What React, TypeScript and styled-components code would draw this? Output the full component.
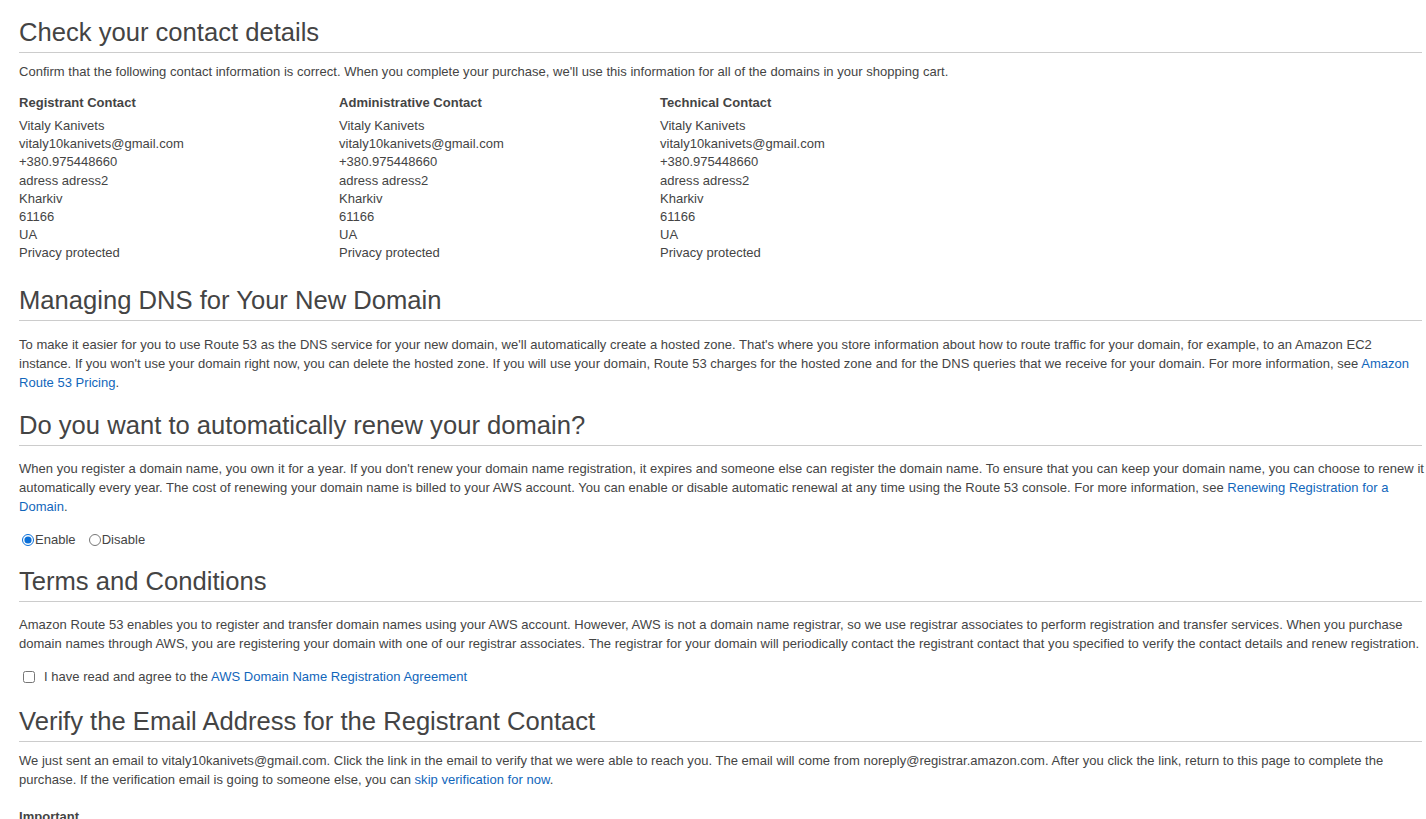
import React from "react";
import styled, { createGlobalStyle } from "styled-components";

const Global = createGlobalStyle`
  html, body { margin: 0; padding: 0; background: #fff; }
  body { font-family: "Liberation Sans", Arial, sans-serif; color: #444; }
`;

const Page = styled.div`
  padding: 0 4px 0 19px;
  font-size: 13px;
  letter-spacing: 0.025px;
`;

const Section = styled.section<{ $top: number }>`
  display: flex;
  flex-direction: column;
  margin-top: ${(p) => p.$top}px;
`;

const Heading = styled.h2`
  margin: 0;
  padding: 15px 0 5px;
  font-size: 25.6px;
  font-weight: normal;
  letter-spacing: 0;
  line-height: 30px;
  color: #444;
  border-bottom: 1px solid #ccc;
`;

const Para = styled.p<{ $top: number }>`
  margin: 0 -3px 0 0;
  padding: ${(p) => p.$top}px 0 0;
  line-height: 19px;
`;

const Link = styled.a`
  color: #1166bb;
  text-decoration: none;
`;

const Contacts = styled.div`
  display: grid;
  grid-template-columns: 320px 321px 320px;
  padding: 13px 0 8px;
`;

const Contact = styled.div`
  display: flex;
  flex-direction: column;
  line-height: 18.15px;
`;

const ContactTitle = styled.div`
  font-weight: bold;
  margin-bottom: 5px;
`;

const Options = styled.div`
  display: flex;
  align-items: center;
  gap: 10px;
  padding-top: 15px;
  line-height: 18px;
`;

const Option = styled.label`
  display: flex;
  align-items: center;
`;

const Radio = styled.input`
  margin: 0 1px 0 3px;
  width: 12px;
  height: 12px;
  accent-color: #0a6fd8;
`;

const CheckRow = styled.label`
  display: flex;
  align-items: center;
  gap: 9px;
  padding-top: 15px;
  line-height: 18px;
`;

const Check = styled.input`
  margin: 0 0 0 4px;
  width: 12px;
  height: 12px;
`;

const Important = styled.div`
  font-weight: bold;
  padding-top: 19px;
  line-height: 18px;
`;

const contactLines = [
  "Vitaly Kanivets",
  "vitaly10kanivets@gmail.com",
  "+380.975448660",
  "adress adress2",
  "Kharkiv",
  "61166",
  "UA",
  "Privacy protected",
];

const titles = ["Registrant Contact", "Administrative Contact", "Technical Contact"];

export default function App() {
  return (
    <Page>
      <Global />
      <Section $top={2}>
        <Heading>Check your contact details</Heading>
        <Para $top={9}>
          Confirm that the following contact information is correct. When you complete your purchase, we'll use this
          information for all of the domains in your shopping cart.
        </Para>
        <Contacts>
          {titles.map((t) => (
            <Contact key={t}>
              <ContactTitle>{t}</ContactTitle>
              {contactLines.map((l) => (
                <div key={l}>{l}</div>
              ))}
            </Contact>
          ))}
        </Contacts>
      </Section>
      <Section $top={0}>
        <Heading>Managing DNS for Your New Domain</Heading>
        <Para $top={14}>
          To make it easier for you to use Route 53 as the DNS service for your new domain, we'll automatically create a
          hosted zone. That's where you store information about how to route traffic for your domain, for example, to an
          Amazon EC2 instance. If you won't use your domain right now, you can delete the hosted zone. If you will use your
          domain, Route 53 charges for the hosted zone and for the DNS queries that we receive for your domain. For more
          information, see <Link href="#">Amazon Route 53 Pricing</Link>.
        </Para>
      </Section>
      <Section $top={3}>
        <Heading>Do you want to automatically renew your domain?</Heading>
        <Para $top={13}>
          When you register a domain name, you own it for a year. If you don't renew your domain name registration, it
          expires and someone else can register the domain name. To ensure that you can keep your domain name, you can
          choose to renew it automatically every year. The cost of renewing your domain name is billed to your AWS account.
          You can enable or disable automatic renewal at any time using the Route 53 console. For more information, see{" "}
          <Link href="#">Renewing Registration for a Domain</Link>.
        </Para>
        <Options>
          <Option>
            <Radio type="radio" name="renew" defaultChecked />
            Enable
          </Option>
          <Option>
            <Radio type="radio" name="renew" />
            Disable
          </Option>
        </Options>
      </Section>
      <Section $top={2}>
        <Heading>Terms and Conditions</Heading>
        <Para $top={13}>
          Amazon Route 53 enables you to register and transfer domain names using your AWS account. However, AWS is not a
          domain name registrar, so we use registrar associates to perform registration and transfer services. When you
          purchase domain names through AWS, you are registering your domain with one of our registrar associates. The
          registrar for your domain will periodically contact the registrant contact that you specified to verify the
          contact details and renew registration.
        </Para>
        <CheckRow>
          <Check type="checkbox" />
          <span>
            I have read and agree to the <Link href="#">AWS Domain Name Registration Agreement</Link>
          </span>
        </CheckRow>
      </Section>
      <Section $top={5}>
        <Heading>Verify the Email Address for the Registrant Contact</Heading>
        <Para $top={9}>
          We just sent an email to vitaly10kanivets@gmail.com. Click the link in the email to verify that we were able to
          reach you. The email will come from noreply@registrar.amazon.com. After you click the link, return to this page to
          complete the purchase. If the verification email is going to someone else, you can{" "}
          <Link href="#">skip verification for now</Link>.
        </Para>
        <Important>Important</Important>
      </Section>
    </Page>
  );
}
